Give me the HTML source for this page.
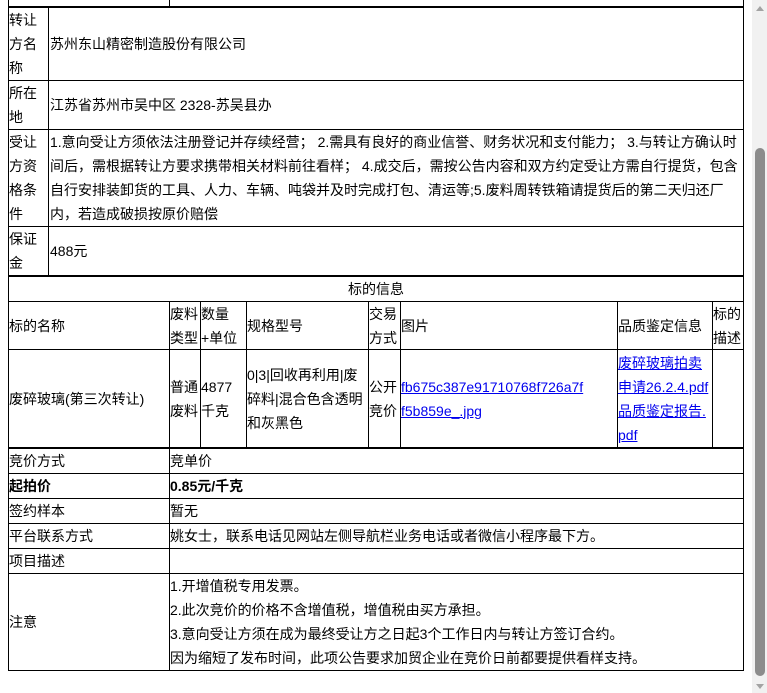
<!DOCTYPE html>
<html><head><meta charset="utf-8"><style>
*{margin:0;padding:0;box-sizing:border-box}
body{width:767px;height:693px;overflow:hidden;background:#fff;position:relative;font-family:"Liberation Sans","Noto Sans CJK SC",sans-serif;font-size:14px;color:#000;line-height:24px}
.l{position:absolute;background:#000}
.t{position:absolute;display:flex;align-items:center;white-space:nowrap}
.t>div{white-space:normal}
a{color:#00e;text-decoration:underline}
b{font-weight:bold}
</style></head><body>
<div class="l" style="left:8px;top:0;width:1px;height:670px"></div>
<div class="l" style="left:743px;top:0;width:1px;height:671px"></div>
<div class="l" style="left:169px;top:0;width:1px;height:6px"></div>
<div class="l" style="left:8px;top:6px;width:736px;height:2px"></div>
<div class="l" style="left:48px;top:7px;width:1px;height:269px"></div>
<div class="l" style="left:8px;top:80px;width:736px;height:1px"></div>
<div class="l" style="left:8px;top:129px;width:736px;height:1px"></div>
<div class="l" style="left:8px;top:226px;width:736px;height:1px"></div>
<div class="l" style="left:8px;top:275px;width:736px;height:2px"></div>
<div class="l" style="left:8px;top:301px;width:736px;height:1px"></div>
<div class="l" style="left:8px;top:349px;width:736px;height:1px"></div>
<div class="l" style="left:8px;top:447px;width:736px;height:2px"></div>
<div class="l" style="left:169px;top:302px;width:1px;height:146px"></div>
<div class="l" style="left:200px;top:302px;width:1px;height:146px"></div>
<div class="l" style="left:246px;top:302px;width:1px;height:146px"></div>
<div class="l" style="left:368px;top:302px;width:1px;height:146px"></div>
<div class="l" style="left:400px;top:302px;width:1px;height:146px"></div>
<div class="l" style="left:617px;top:302px;width:1px;height:146px"></div>
<div class="l" style="left:712px;top:302px;width:1px;height:146px"></div>
<div class="l" style="left:169px;top:449px;width:1px;height:221px"></div>
<div class="l" style="left:8px;top:473px;width:736px;height:1px"></div>
<div class="l" style="left:8px;top:498px;width:736px;height:1px"></div>
<div class="l" style="left:8px;top:523px;width:736px;height:1px"></div>
<div class="l" style="left:8px;top:548px;width:736px;height:1px"></div>
<div class="l" style="left:8px;top:573px;width:736px;height:1px"></div>
<div class="l" style="left:8px;top:670px;width:736px;height:1px"></div>

<div class="t" style="left:9px;top:8px;width:39px;height:72px"><div>转让<br>方名<br>称</div></div>
<div class="t" style="left:50px;top:8px;height:72px">苏州东山精密制造股份有限公司</div>
<div class="t" style="left:9px;top:81px;width:39px;height:48px"><div>所在<br>地</div></div>
<div class="t" style="left:50px;top:81px;height:48px">江苏省苏州市吴中区 2328-苏吴县办</div>
<div class="t" style="left:9px;top:130px;width:39px;height:96px"><div>受让<br>方资<br>格条<br>件</div></div>
<div class="t" style="left:50px;top:130px;width:692px;height:96px"><div>1.意向受让方须依法注册登记并存续经营； 2.需具有良好的商业信誉、财务状况和支付能力； 3.与转让方确认时间后，需根据转让方要求携带相关材料前往看样； 4.成交后，需按公告内容和双方约定受让方需自行提货，包含自行安排装卸货的工具、人力、车辆、吨袋并及时完成打包、清运等;5.废料周转铁箱请提货后的第二天归还厂内，若造成破损按原价赔偿</div></div>
<div class="t" style="left:9px;top:227px;width:39px;height:48px"><div>保证<br>金</div></div>
<div class="t" style="left:50px;top:227px;height:48px">488元</div>

<div class="t" style="left:9px;top:277px;width:734px;height:24px;justify-content:center">标的信息</div>
<div class="t" style="left:9px;top:302px;height:47px">标的名称</div>
<div class="t" style="left:170px;top:302px;height:47px"><div>废料<br>类型</div></div>
<div class="t" style="left:201px;top:302px;height:47px"><div>数量<br>+单位</div></div>
<div class="t" style="left:247px;top:302px;height:47px">规格型号</div>
<div class="t" style="left:369px;top:302px;height:47px"><div>交易<br>方式</div></div>
<div class="t" style="left:401px;top:302px;height:47px">图片</div>
<div class="t" style="left:618px;top:302px;height:47px">品质鉴定信息</div>
<div class="t" style="left:713px;top:302px;height:47px"><div>标的<br>描述</div></div>

<div class="t" style="left:9px;top:350px;height:97px">废碎玻璃(第三次转让)</div>
<div class="t" style="left:170px;top:350px;height:97px"><div>普通<br>废料</div></div>
<div class="t" style="left:201px;top:350px;height:97px"><div>4877<br>千克</div></div>
<div class="t" style="left:247px;top:350px;width:121px;height:97px"><div>0|3|回收再利用|废<br>碎料|混合色含透明<br>和灰黑色</div></div>
<div class="t" style="left:369px;top:350px;height:97px"><div>公开<br>竞价</div></div>
<div class="t" style="left:401px;top:350px;width:216px;height:97px"><div><a>fb675c387e91710768f726a7f<br>f5b859e_.jpg</a></div></div>
<div class="t" style="left:618px;top:350px;width:94px;height:97px"><div><a>废碎玻璃拍卖<br>申请26.2.4.pdf</a><br><a>品质鉴定报告.<br>pdf</a></div></div>

<div class="t" style="left:9px;top:449px;height:24px">竞价方式</div>
<div class="t" style="left:170px;top:449px;height:24px">竞单价</div>
<div class="t" style="left:9px;top:474px;height:24px"><b>起拍价</b></div>
<div class="t" style="left:170px;top:474px;height:24px"><b>0.85元/千克</b></div>
<div class="t" style="left:9px;top:499px;height:24px">签约样本</div>
<div class="t" style="left:170px;top:499px;height:24px">暂无</div>
<div class="t" style="left:9px;top:524px;height:24px">平台联系方式</div>
<div class="t" style="left:170px;top:524px;height:24px">姚女士，联系电话见网站左侧导航栏业务电话或者微信小程序最下方。</div>
<div class="t" style="left:9px;top:549px;height:24px">项目描述</div>
<div class="t" style="left:9px;top:574px;height:96px">注意</div>
<div class="t" style="left:170px;top:574px;height:96px"><div>1.开增值税专用发票。<br>2.此次竞价的价格不含增值税，增值税由买方承担。<br>3.意向受让方须在成为最终受让方之日起3个工作日内与转让方签订合约。<br>因为缩短了发布时间，此项公告要求加贸企业在竞价日前都要提供看样支持。</div></div>

<div style="position:absolute;left:752px;top:0;width:15px;height:693px;background:#f1f1f1"></div>
<div style="position:absolute;left:755px;top:148px;width:10px;height:528px;background:#8c8c8c;border-radius:5px"></div>
<div style="position:absolute;left:756px;top:6px;width:0;height:0;border-left:4px solid transparent;border-right:4px solid transparent;border-bottom:5px solid #a3a3a3"></div>
<div style="position:absolute;left:756px;top:684px;width:0;height:0;border-left:4px solid transparent;border-right:4px solid transparent;border-top:5px solid #a3a3a3"></div>
</body></html>
